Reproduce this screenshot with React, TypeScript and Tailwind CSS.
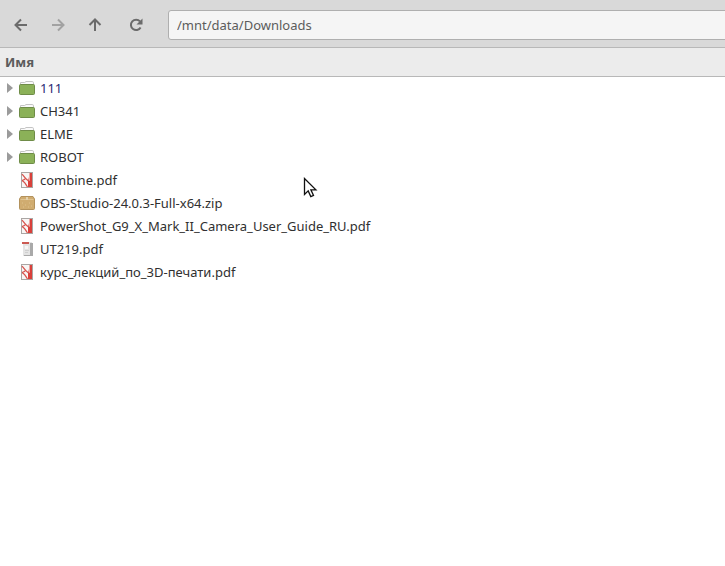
import React from 'react';

type FileKind = 'folder' | 'pdf' | 'zip' | 'doc';

interface FileEntry {
  name: string;
  kind: FileKind;
  visited?: boolean;
}

const files: FileEntry[] = [
  { name: '111', kind: 'folder', visited: true },
  { name: 'CH341', kind: 'folder' },
  { name: 'ELME', kind: 'folder' },
  { name: 'ROBOT', kind: 'folder' },
  { name: 'combine.pdf', kind: 'pdf' },
  { name: 'OBS-Studio-24.0.3-Full-x64.zip', kind: 'zip' },
  { name: 'PowerShot_G9_X_Mark_II_Camera_User_Guide_RU.pdf', kind: 'pdf' },
  { name: 'UT219.pdf', kind: 'doc' },
  { name: 'курс_лекций_по_3D-печати.pdf', kind: 'pdf' },
];

function FolderIcon() {
  return (
    <svg width="16" height="16" viewBox="0 0 16 16">
      <path d="M1.5 5V2.5h4.2l1.3-1h6.2q1.3 0 1.3 1.3V5" fill="#fafafa" stroke="#c4c4c4" />
      <rect x="0.5" y="4.5" width="15" height="10" rx="1" fill="#8bb158" stroke="#6f8c48" />
    </svg>
  );
}

function PdfIcon() {
  return (
    <svg width="16" height="16" viewBox="0 0 16 16">
      <rect x="2.5" y="0.5" width="11" height="15" fill="#f8f6f5" stroke="#aaa6a4" />
      <path d="M11 1h2v14H9V9z" fill="#d9403b" />
      <path d="M10 1h1v8l-1-.5z" fill="#eda5a1" />
      <path d="M3 2c1.5 2 3 4.500 6.500 7M3 8.500c2-.5 3-1 4-2.500M3 8.500c2 1 4 3.500 5.500 6.500" fill="none" stroke="#d8524c" strokeWidth="1.2" />
    </svg>
  );
}

function ZipIcon() {
  return (
    <svg width="16" height="16" viewBox="0 0 16 16">
      <path d="M2 1.5h12l1.5 2.5v9.5a1 1 0 0 1-1 1h-13a1 1 0 0 1-1-1V4z" fill="#d0ac70" stroke="#b3925d" />
      <path d="M1.5 4.5h13" stroke="#dfc391" />
      <path d="M7 2h2v3H7z" fill="#e4d1ad" />
      <path d="M3 8h1M6 10h1M10 8h1M12 11h1M4 12h1M9 12h1" stroke="#dfc28e" />
    </svg>
  );
}

function DocIcon() {
  return (
    <svg width="16" height="16" viewBox="0 0 16 16">
      <path d="M4 1h9v14H4z" fill="#e4e4e4" />
      <path d="M11 2h3v13H5v-1h6z" fill="#a9a9a9" />
      <path d="M3 1h7v2H3z" fill="#cc5a53" />
      <path d="M6 5h3v3H6z" fill="#f6f6f6" />
      <path d="M6 9.5h4M6 11.5h3" stroke="#cfcfcf" />
    </svg>
  );
}

function FileIcon({ kind }: { kind: FileKind }) {
  if (kind === 'folder') return <FolderIcon />;
  if (kind === 'zip') return <ZipIcon />;
  if (kind === 'doc') return <DocIcon />;
  return <PdfIcon />;
}

interface NavButtonProps {
  label: string;
  disabled?: boolean;
  children: React.ReactNode;
}

function NavButton({ label, disabled, children }: NavButtonProps) {
  return (
    <button
      aria-label={label}
      disabled={disabled}
      className="flex h-8 w-8 items-center justify-center text-[#6b6b6b] disabled:text-[#a2a2a2]"
    >
      <svg width="16" height="16" viewBox="0 0 16 16" fill="none" stroke="currentColor" strokeWidth="2">
        {children}
      </svg>
    </button>
  );
}

export default function App() {
  const [path, setPath] = React.useState('/mnt/data/Downloads');

  return (
    <div className="relative min-h-screen overflow-x-hidden bg-white font-['Noto_Sans',sans-serif] text-[13px] text-[#303030]">
      {/* Toolbar */}
      <header className="flex items-center border-b border-[#b8b8b8] bg-[#d9d9d9] pt-[9px] pb-1.5 pl-[5px]">
        <div className="flex items-center gap-[5px]">
          <NavButton label="Назад">
            <path d="M14 8H3M8 2.5 2.5 8 8 13.5" />
          </NavButton>
          <NavButton label="Вперёд" disabled>
            <path d="M2 8h11M8 2.5 13.5 8 8 13.5" />
          </NavButton>
          <NavButton label="Вверх">
            <path d="M8 14V3M2.5 8 8 2.5 13.5 8" />
          </NavButton>
        </div>
        <div className="mr-4 ml-[9px]">
          <NavButton label="Обновить">
            <path d="M12.6 10.5A5.2 5.2 0 1 1 12 4.4" />
            <path d="M14.5 1.5v6h-6z" fill="currentColor" stroke="none" />
          </NavButton>
        </div>
        <input
          type="text"
          aria-label="Путь"
          value={path}
          onChange={(e) => setPath(e.target.value)}
          className="-mr-2 h-[30px] min-w-0 flex-1 rounded-[3px] border border-[#afafaf] bg-[#f5f5f5] px-2 text-[#5c5c5c] outline-none"
        />
      </header>

      {/* File list */}
      <table className="w-full border-collapse">
        <thead>
          <tr className="h-7 border-b border-[#b8b8b8] bg-[#ececec]">
            <th className="px-[5px] pt-0.5 pb-0 text-left font-bold text-[#5c5c5c]">Имя</th>
          </tr>
        </thead>
        <tbody>
          {files.map((file) => (
            <tr key={file.name} className="h-[23px]">
              <td className="p-0">
                <div className="flex items-center pl-[5px]">
                  <div className="w-3.5">
                    {file.kind === 'folder' && (
                      <button aria-label={`Развернуть ${file.name}`} className="block">
                        <svg width="10" height="12" viewBox="0 0 10 12">
                          <path d="M2 1v10l6-5z" fill="#9b9b9b" />
                        </svg>
                      </button>
                    )}
                  </div>
                  <FileIcon kind={file.kind} />
                  <span className={file.visited ? 'ml-[5px] leading-5 text-[#2a2a72]' : 'ml-[5px] leading-5'}>
                    {file.name}
                  </span>
                </div>
              </td>
            </tr>
          ))}
        </tbody>
      </table>

      {/* Mouse pointer */}
      <svg className="pointer-events-none absolute top-[177px] left-[303px]" width="16" height="22" viewBox="0 0 16 22">
        <path d="M1.5 1.5v16l3.7-3.6 2.6 5.7 2.7-1.2-2.6-5.6h5z" fill="#fff" stroke="#111" strokeWidth="1.3" />
      </svg>
    </div>
  );
}
